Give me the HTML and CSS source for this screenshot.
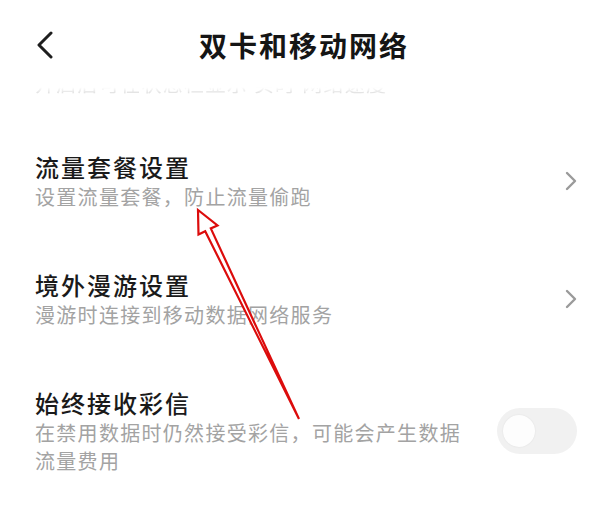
FILE: index.html
```html
<!DOCTYPE html>
<html lang="zh-CN">
<head>
    <meta charset="UTF-8">
    <meta name="viewport" content="width=device-width, initial-scale=1.0">
    <title>双卡和移动网络</title>
    <link rel="stylesheet" href="styles.css">
</head>
<body>

<div class="screen">
    <div class="header">
        <svg class="back" width="18" height="28" viewBox="0 0 18 28">
            <polyline points="15,2 3,14 15,26" fill="none" stroke="#1e1e1e" stroke-width="3" stroke-linecap="round" stroke-linejoin="round"/>
        </svg>
        <h1 class="title">双卡和移动网络</h1>
    </div>

    <div class="faded">
        <div class="faded-text">开启后可在状态栏显示 实时 网络速度</div>
    </div>

    <div class="row">
        <div class="row-text">
            <div class="row-title">流量套餐设置</div>
            <div class="row-sub">设置流量套餐，防止流量偷跑</div>
        </div>
        <svg class="chevron" width="12" height="20" viewBox="0 0 12 20">
            <polyline points="2,2 10,10 2,18" fill="none" stroke="#9a9a9a" stroke-width="2.4" stroke-linecap="round" stroke-linejoin="round"/>
        </svg>
    </div>

    <div class="row">
        <div class="row-text">
            <div class="row-title">境外漫游设置</div>
            <div class="row-sub">漫游时连接到移动数据网络服务</div>
        </div>
        <svg class="chevron" width="12" height="20" viewBox="0 0 12 20">
            <polyline points="2,2 10,10 2,18" fill="none" stroke="#9a9a9a" stroke-width="2.4" stroke-linecap="round" stroke-linejoin="round"/>
        </svg>
    </div>

    <div class="row">
        <div class="row-text">
            <div class="row-title">始终接收彩信</div>
            <div class="row-sub">在禁用数据时仍然接受彩信，可能会产生数据流量费用</div>
        </div>
        <div class="switch">
            <div class="knob"></div>
        </div>
    </div>

    <!-- red annotation arrow drawn over the screenshot -->
    <svg class="arrow" width="600" height="511" viewBox="0 0 600 511">
        <polygon points="198,210 198.5,234.5 205.2,231.2 299,419 210.8,228.4 217.5,225.4"
                 fill="#fff" stroke="#dc0c0c" stroke-width="2.2" stroke-linejoin="miter"/>
    </svg>
</div>

</body>
</html>
```

FILE: styles.css
```css
body {
    margin: 0;
    padding: 0;
    background-color: #fff;
    font-family: "Noto Sans CJK SC", "Noto Sans", sans-serif;
    overflow: hidden;
}

.screen {
    position: relative;
    width: 600px;
    height: 511px;
}

.header {
    display: flex;
    align-items: center;
    height: 50px;
    padding: 20px 0 0 0;
    position: relative;
}

.back {
    margin-left: 36px;
}

.title {
    margin: 0;
    flex: 1;
    text-align: center;
    font-size: 28px;
    font-weight: 700;
    letter-spacing: 2px;
    color: #151515;
    padding-right: 46px;
    line-height: 50px;
}

.faded {
    height: 23px;
    padding-left: 35px;
    margin-bottom: 29px;
}

.faded-text {
    font-size: 20px;
    line-height: 28px;
    letter-spacing: 1.3px;
    color: #e2e2e2;
    -webkit-mask-image: linear-gradient(to bottom, transparent 62%, #000 82%, transparent 86%);
    mask-image: linear-gradient(to bottom, transparent 62%, #000 82%, transparent 86%);
}

.row {
    display: flex;
    align-items: center;
    padding: 29px 23px 29px 35px;
}

.row-text {
    flex: 1;
    max-width: 440px;
}

.row-title {
    font-size: 24px;
    line-height: 32px;
    font-weight: 500;
    letter-spacing: 2px;
    color: #1a1a1a;
}

.row-sub {
    font-size: 20px;
    line-height: 28px;
    letter-spacing: 1.3px;
    color: #a3a3a3;
}

.chevron {
    margin-left: auto;
}

.switch {
    margin-left: auto;
    width: 80px;
    height: 46px;
    border-radius: 23px;
    background-color: #f1f1f1;
    display: flex;
    align-items: center;
    padding-left: 6px;
    box-sizing: border-box;
}

.knob {
    width: 32px;
    height: 32px;
    border-radius: 50%;
    background-color: #fdfdfd;
    box-shadow: 0 0 2px rgba(0, 0, 0, 0.08);
}

.arrow {
    position: absolute;
    top: 0;
    left: 0;
    pointer-events: none;
}
```
